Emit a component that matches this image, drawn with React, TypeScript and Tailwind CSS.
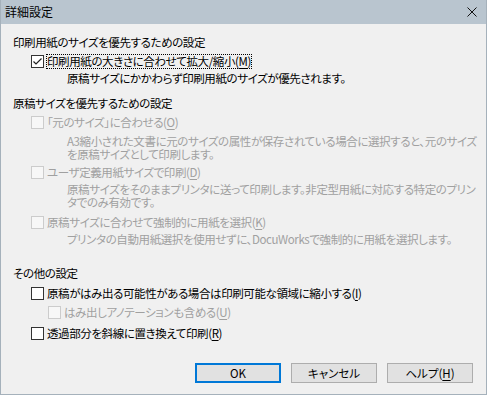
import React from 'react';
import clsx from 'clsx';

const Mn: React.FC<{ c: string }> = ({ c }) => <span className="underline underline-offset-[2px]">{c}</span>;

const CheckBox: React.FC<{ checked?: boolean; disabled?: boolean }> = ({ checked, disabled }) => (
  <span
    className={clsx(
      'flex h-[13px] w-[13px] shrink-0 items-center justify-center border',
      disabled ? 'border-[#cccccc] bg-[#f7f7f7]' : 'border-[#333333] bg-white'
    )}
  >
    {checked && (
      <svg width="11" height="11" viewBox="0 0 11 11">
        <polyline points="1.5,5.5 4,8 9.5,2.5" fill="none" stroke="#222222" strokeWidth="1.2" />
      </svg>
    )}
  </span>
);

const CheckRow: React.FC<{
  checked?: boolean;
  disabled?: boolean;
  focus?: boolean;
  className?: string;
  children: React.ReactNode;
}> = ({ checked, disabled, focus, className, children }) => (
  <div className={clsx('flex h-[16px] items-center gap-[2px]', className)}>
    <CheckBox checked={checked} disabled={disabled} />
    <span
      className={clsx(
        'whitespace-nowrap border leading-[13px]',
        focus ? 'border-dotted border-black' : 'border-transparent',
        disabled ? 'text-[#a0a0a0]' : 'text-black'
      )}
    >
      {children}
    </span>
  </div>
);

const Desc: React.FC<{ className?: string; children: React.ReactNode }> = ({ className, children }) => (
  <div className={clsx('ml-[54px] whitespace-nowrap leading-[13px]', className)}>{children}</div>
);

const Button: React.FC<{ primary?: boolean; children: React.ReactNode }> = ({ primary, children }) => (
  <button
    className={clsx(
      'flex h-[20px] w-[86px] items-center justify-center bg-[#e1e1e1] leading-[16px] tracking-normal',
      primary ? 'border-2 border-[#0078d7]' : 'border border-[#adadad]'
    )}
  >
    {children}
  </button>
);

export default function App() {
  return (
    <div className="flex h-[395px] w-[487px] flex-col border-x border-b border-[#a5b1bb] bg-[#f0f0f0] text-[11.5px] tracking-[-0.4px] text-black [font-family:'Noto_Sans_CJK_JP','Noto_Sans',sans-serif] [font-feature-settings:'palt']">
      <div className="flex h-[24px] shrink-0 items-center justify-between bg-[#b9c5cf] pl-[4px] pr-[9px]">
        <span className="text-[12px] leading-[16px] tracking-normal">詳細設定</span>
        <svg width="10" height="10" viewBox="0 0 10 10">
          <path d="M0.5 0.5 L9.5 9.5 M9.5 0.5 L0.5 9.5" stroke="#111111" strokeWidth="1" />
        </svg>
      </div>

      <div className="flex flex-col pl-[12px]">
        <div className="mt-[10px] h-[16px] leading-[16px]">印刷用紙のサイズを優先するための設定</div>
        <CheckRow checked focus className="ml-[18px] mt-[3px]">
          印刷用紙の大きさに合わせて拡大/縮小(<Mn c="M" />)
        </CheckRow>
        <Desc className="mt-[1px] h-[16px] leading-[16px]">原稿サイズにかかわらず印刷用紙のサイズが優先されます。</Desc>

        <div className="mt-[9px] h-[16px] leading-[16px]">原稿サイズを優先するための設定</div>
        <CheckRow disabled className="ml-[18px] mt-[3px]">
          「元のサイズ」に合わせる(<Mn c="O" />)
        </CheckRow>
        <Desc className="mt-[5px] text-[#a0a0a0]">
          A3縮小された文書に元のサイズの属性が保存されている場合に選択すると、元のサイズ
          <br />
          を原稿サイズとして印刷します。
        </Desc>
        <CheckRow disabled className="ml-[18px] mt-[3px]">
          ユーザ定義用紙サイズで印刷(<Mn c="D" />)
        </CheckRow>
        <Desc className="mt-[3px] text-[#a0a0a0]">
          原稿サイズをそのままプリンタに送って印刷します。非定型用紙に対応する特定のプリン
          <br />
          タでのみ有効です。
        </Desc>
        <CheckRow disabled className="ml-[18px] mt-[5px]">
          原稿サイズに合わせて強制的に用紙を選択(<Mn c="K" />)
        </CheckRow>
        <Desc className="mt-[1px] h-[16px] leading-[16px] text-[#a0a0a0]">
          プリンタの自動用紙選択を使用せずに、DocuWorksで強制的に用紙を選択します。
        </Desc>

        <div className="mt-[18px] h-[16px] leading-[16px]">その他の設定</div>
        <CheckRow className="ml-[18px] mt-[4px]">
          原稿がはみ出る可能性がある場合は印刷可能な領域に縮小する(<Mn c="I" />)
        </CheckRow>
        <CheckRow disabled className="ml-[35px] mt-[3px]">
          はみ出しアノテーションも含める(<Mn c="U" />)
        </CheckRow>
        <CheckRow className="ml-[18px] mt-[5px]">
          透過部分を斜線に置き換えて印刷(<Mn c="R" />)
        </CheckRow>
      </div>

      <div className="mt-[22px] flex justify-end gap-[10px] pr-[13px]">
        <Button primary>OK</Button>
        <Button>キャンセル</Button>
        <Button>
          ヘルプ(<Mn c="H" />)
        </Button>
      </div>
    </div>
  );
}
